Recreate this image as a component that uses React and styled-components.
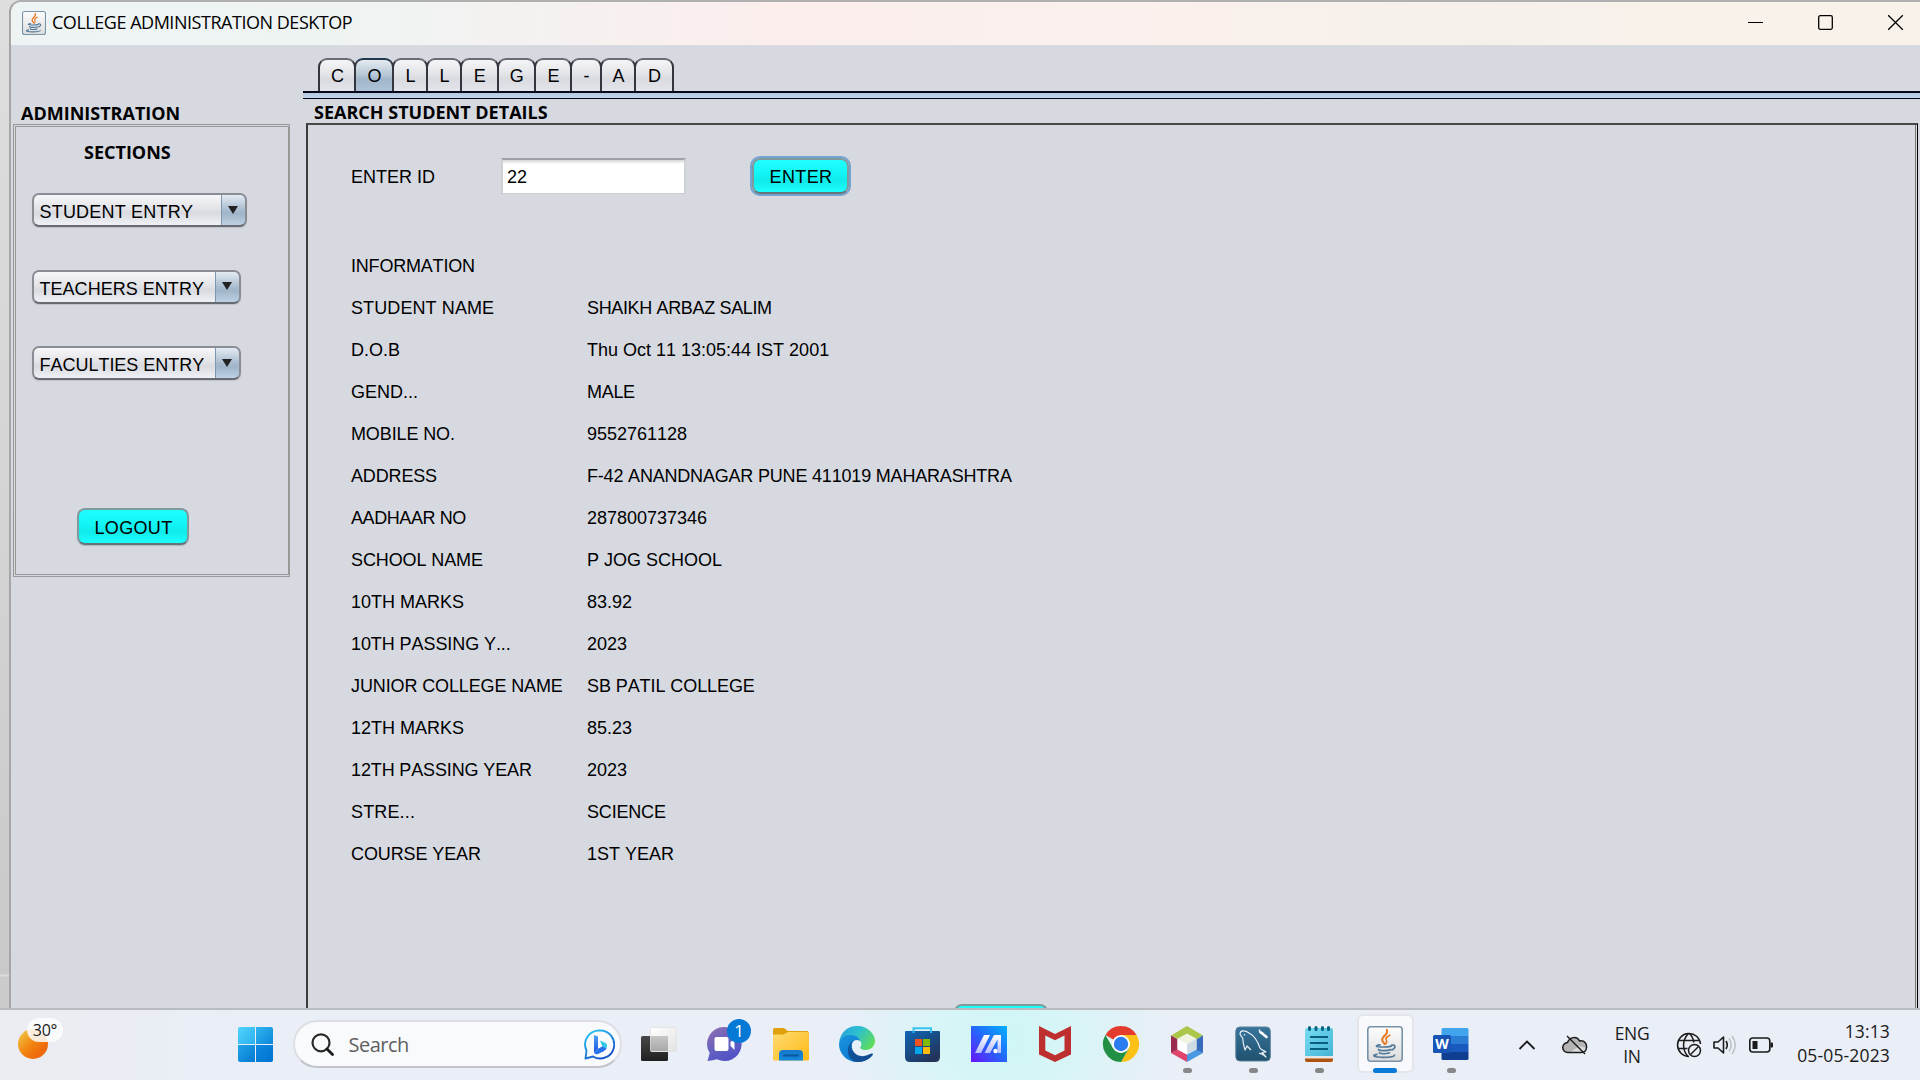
import React from "react";
import styled, { createGlobalStyle } from "styled-components";

const swing = `"Liberation Sans", Arial, sans-serif`;
const segoe = `"Open Sans", "Noto Sans", sans-serif`;

const Global = createGlobalStyle`
  * { box-sizing: border-box; }
  body { margin: 0; overflow: hidden; background: #d6d9e0; }
`;

const Screen = styled.div`
  width: 1920px;
  height: 1080px;
  display: flex;
  flex-direction: column;
  overflow: hidden;
  font-family: ${swing};
  font-size: 18px;
  font-kerning: none;
  color: #000;
  background: #d5d5d5;
`;

const Desktop = styled.div`
  height: 1008px;
  display: flex;
  background: linear-gradient(180deg, #dedede 0, #d2d2d2 60%, #c9c9c9 974px, #dcdcdc 975px, #dcdcdc 976px, #cbcbcb 977px);
`;

const AppWindow = styled.div`
  flex: 1;
  margin-left: 9px;
  display: flex;
  flex-direction: column;
  border-top: 2px solid #b0b0b0;
  border-left: 2px solid #a6a6a6;
  border-top-left-radius: 12px;
  overflow: hidden;
  background: #d6d9e0;
`;

const TitleBar = styled.header`
  height: 43px;
  flex: none;
  display: flex;
  align-items: center;
  padding: 0 16px 2px 11px;
  background: linear-gradient(90deg, #eef4f4 0, #eff4f3 340px, #fbeeed 760px, #fbf0ed 1100px, #f5f1ea 1480px, #f9f2eb 1700px);
`;

const TitleText = styled.h1`
  margin: 0 auto 1px 6px;
  font: 400 18px/24px ${segoe};
  letter-spacing: -0.47px;
`;

const WindowControls = styled.div`
  display: flex;
  gap: 53px;
  svg { display: block; }
`;

const Body = styled.div`
  flex: 1;
  display: flex;
  min-height: 0;
`;

const Sidebar = styled.aside`
  width: 292px;
  flex: none;
  padding: 57px 0 0 2px;
`;

const GroupTitle = styled.h2`
  margin: 0 0 0 ${(p) => p.$indent}px;
  font: 700 18px/22px ${segoe};
`;

const SidePanel = styled.section`
  width: 277px;
  height: 453px;
  border: 3px double #989898;
  border-right: 2px solid #999;
  padding-top: 14px;
  display: flex;
  flex-direction: column;
  align-items: flex-start;
`;

const ComboList = styled.div`
  display: flex;
  flex-direction: column;
  gap: 42.5px;
  margin: 30px 0 128px 15.5px;
`;

const Combo = styled.div`
  width: ${(p) => p.$width}px;
  height: 34px;
  display: flex;
  border: 2px solid #8b8d94;
  border-bottom-color: #686a73;
  border-radius: 7px;
  overflow: hidden;
  background: linear-gradient(#f7f7f9, #e3e4e8 45%, #d8dae0 60%, #f0f1f5);
  box-shadow: 0 1px 1px #bfc2c9;
`;

const ComboText = styled.span`
  flex: 1;
  padding-left: 6px;
  line-height: 34px;
  letter-spacing: ${(p) => p.$spacing}px;
  white-space: nowrap;
`;

const ComboArrow = styled.span`
  width: 26px;
  margin: -2px -2px -2px 0;
  display: flex;
  align-items: center;
  justify-content: center;
  border: 2px solid #5b7590;
  border-left: 1px solid #7f97ae;
  border-top-color: #7e93a8;
  border-bottom-color: #3d556f;
  border-radius: 0 7px 7px 0;
  background: linear-gradient(#e3ebf2, #a9bccf 50%, #a0b5c9 62%, #bed1e4);
  &::after {
    content: "";
    border: 5px solid transparent;
    border-top: 8px solid #222;
    border-bottom: 0;
    margin-bottom: 1px;
  }
`;

const Button = styled.button`
  width: ${(p) => p.$width}px;
  height: ${(p) => p.$height}px;
  flex: none;
  padding: 2px 0 0 1px;
  margin: ${(p) => p.$margin || 0};
  border: 2px solid #7f9a9d;
  border-bottom-color: #64747a;
  border-radius: 8px;
  background: linear-gradient(#20ffff, #12f4f4 45%, #10eaea 65%, #1cffff);
  box-shadow: ${(p) => (p.$focus ? "0 0 0 2px #73a4d1" : "0 1px 1px #b2b5bc")};
  font: 18px/20px ${swing};
  letter-spacing: 0.35px;
  color: #000;
`;

const Main = styled.main`
  flex: 1;
  min-width: 0;
  display: flex;
  flex-direction: column;
`;

const Tabs = styled.nav`
  display: flex;
  height: 47px;
  flex: none;
  padding: 13px 0 0 15px;
  margin-bottom: -1px;
`;

const Tab = styled.div`
  width: ${(p) => p.$width}px;
  height: 34px;
  margin-right: -2px;
  padding-left: 1px;
  border: 2px solid ${(p) => (p.$on ? "#22384f" : "#6a6b73")};
  border-left-color: #34353f;
  border-right-color: #34353f;
  border-bottom: ${(p) => (p.$on ? "0" : "1px solid #55565f")};
  border-radius: 9px 9px 0 0;
  background: ${(p) =>
    p.$on
      ? "linear-gradient(#e4ebf1, #b4c5d4 48%, #a2b6ca 60%, #afc4d8)"
      : "linear-gradient(#f5f5f7, #e3e4e8 45%, #d9dbe1 60%, #e2e4ea)"};
  text-align: center;
  line-height: 33px;
`;

const TabRail = styled.div`
  height: 8px;
  flex: none;
  border: solid #05051c;
  border-width: 2px 0 1px;
  background: linear-gradient(#b3c9de, #c0d6ea);
`;

const MainTitle = styled(GroupTitle)`
  padding-top: 2px;
  flex: none;
`;

const Panel = styled.section`
  flex: 1;
  min-height: 0;
  margin: 0 2px 0 3px;
  border-left: 2px solid #3b3b3b;
  border-top: 2px solid #484848;
  border-right: 1px solid #000;
  box-shadow: inset -1px 0 #d6d9e0, inset -2px 0 #777;
  overflow: hidden;
  padding: 30px 0 0 43px;
`;

const SearchRow = styled.div`
  height: 41px;
  display: flex;
  align-items: center;
  margin-bottom: 49px;
`;

const FieldLabel = styled.label`
  width: 150px;
  padding-top: 3px;
`;

const IdField = styled.div`
  width: 185px;
  height: 36px;
  margin-right: 66px;
  padding-left: 4px;
  border: 1px solid #c9cbd0;
  border-left: 2px solid #cfd1d6;
  border-right: 2px solid #cfd1d6;
  border-top: 2px solid #a0a1a5;
  background: linear-gradient(#d4d5d8, #fff 4px);
  line-height: 35px;
`;

const Details = styled.dl`
  margin: 0;
  display: grid;
  grid-template-columns: 236px 1fr;
  grid-auto-rows: 42px;
  line-height: 42px;
  white-space: nowrap;
`;

const Term = styled.dt`
  letter-spacing: ${(p) => p.$spacing || 0}px;
`;

const Value = styled.dd`
  margin: 0;
  letter-spacing: ${(p) => p.$spacing || 0}px;
`;

const Taskbar = styled.footer`
  height: 72px;
  display: flex;
  align-items: flex-start;
  border-top: 2px solid #b9bbc0;
  background:
    radial-gradient(ellipse 170px 130px at 1005px 30px, #cff6f5 0, #d6f5f6 35%, rgba(220, 242, 247, 0) 100%),
    linear-gradient(90deg, #ebecf1, #e9eef7 260px, #eaeef7);
  font-family: ${segoe};
  color: #1b1b1b;
`;

const Weather = styled.div`
  width: 220px;
  height: 70px;
  padding: 19px 0 0 18px;
`;

const Sun = styled.div`
  width: 30px;
  height: 30px;
  border-radius: 50%;
  background: linear-gradient(135deg, #f0b93c 15%, #f2820f 50%, #ee6a0c 75%);
  position: relative;
`;

const Degrees = styled.span`
  position: absolute;
  left: 9px;
  top: -11px;
  width: 36px;
  height: 24px;
  border-radius: 12px;
  background: rgba(252, 252, 252, 0.86);
  text-align: center;
  font-size: 16px;
  line-height: 24px;
  letter-spacing: -0.2px;
`;

const Start = styled.div`
  width: 35px;
  height: 35px;
  margin: 17px 20px 0 18px;
  display: grid;
  grid-template-columns: 17px 17px;
  grid-template-rows: 17px 17px;
  gap: 1px;
  border-radius: 2px;
  overflow: hidden;
  span:nth-child(1) { background: linear-gradient(135deg, #51d4fd, #2ab0ee); }
  span:nth-child(2) { background: linear-gradient(135deg, #30b6f0, #0d86da); }
  span:nth-child(3) { background: linear-gradient(135deg, #22a5e8, #0579d4); }
  span:nth-child(4) { background: linear-gradient(135deg, #0f8ae0, #0072d0); }
`;

const SearchBox = styled.div`
  width: 329px;
  height: 48px;
  margin: 10px 4px 0 0;
  padding: 0 5px 0 15.5px;
  display: flex;
  align-items: center;
  border: 2px solid #dedfe5;
  border-bottom-color: #c3c4ca;
  border-radius: 24px;
  background: #f9fafc;
`;

const SearchText = styled.span`
  flex: 1;
  padding-left: 15px;
  font-size: 20px;
  letter-spacing: -0.5px;
  color: #5f5f61;
`;

const AppCell = styled.div`
  width: 66px;
  height: 70px;
  display: flex;
  flex-direction: column;
  align-items: center;
`;

const AppTile = styled.div`
  width: 57px;
  height: 59px;
  margin-top: 4px;
  padding-top: 10px;
  display: flex;
  flex-direction: column;
  align-items: center;
  border-radius: 6px;
  border: 2px solid ${(p) => (p.$active ? "#e3e5ea" : "transparent")};
  background: ${(p) => (p.$active ? "#f8f9fc" : "none")};
  svg { display: block; flex: none; overflow: visible; }
`;

const Running = styled.i`
  width: ${(p) => (p.$active ? 24 : 9)}px;
  height: 5px;
  margin-top: 6px;
  flex: none;
  border-radius: 3px;
  background: ${(p) => (p.$active ? "#0a7ad8" : "#878787")};
`;

const Tray = styled.div`
  flex: 1;
  height: 70px;
  display: flex;
  align-items: center;
  padding: 0 29px 0 34px;
  svg { display: block; flex: none; }
`;

const TrayText = styled.div`
  width: ${(p) => p.$width}px;
  margin: 0 ${(p) => p.$after}px 0 ${(p) => p.$before}px;
  padding-bottom: ${(p) => p.$lift}px;
  font-size: 17.5px;
  line-height: ${(p) => p.$line}px;
  letter-spacing: ${(p) => p.$spacing}px;
  text-align: ${(p) => p.$align};
  white-space: nowrap;
`;

const Gap = styled.span`
  width: ${(p) => p.$w}px;
  flex: none;
`;

function JavaIcon({ size, id }) {
  return (
    <svg width={size} height={size} viewBox="0 0 36 36">
      <defs>
        <linearGradient id={id} x1="0" y1="0" x2="0" y2="1">
          <stop offset="0" stopColor="#fdfdfd" />
          <stop offset="1" stopColor="#dcdcdd" />
        </linearGradient>
      </defs>
      <rect x="0.8" y="0.8" width="34.4" height="34.4" rx="3" fill={`url(#${id})`} stroke="#7892a8" strokeWidth="1.6" />
      <g fill="none" stroke="#e87a22" strokeWidth="2" strokeLinecap="round">
        <path d="M19.8 3.8c2.2 4.8-5.6 6.6-4.6 10.4.3 1.500 1.700 2.600 2.400 3.800" />
        <path d="M22.800 9.300c-2.700 1.300-4.700 2.600-3.500 4.700.9 1.500.6 2.500-.5 3.900" strokeWidth="1.7" />
      </g>
      <g fill="none" stroke="#537998" strokeWidth="1.700" strokeLinecap="round">
        <path d="M13 18.900c-5 .9-5.400 2 3 2.100 4 0 6.500-.3 8.400-.9" />
        <path d="M24.800 19.200c3.800-.8 4.400 3 .2 4.700" />
        <path d="M11.500 23.300c-1 1.300 7.500 2 12.200.3" />
        <path d="M12.500 26.500c-.8 1.300 6 1.900 10 .3" />
        <path d="M10 28.300c-6.500 1.300-2.300 3 6.700 3 6.500 0 10.500-1 10.800-2.100" />
      </g>
    </svg>
  );
}

const TaskView = () => (
  <svg width="36" height="36" viewBox="0 0 36 36">
    <defs>
      <linearGradient id="tvDark" x1="0" y1="0" x2="0" y2="1"><stop offset="0" stopColor="#484848" /><stop offset="1" stopColor="#202020" /></linearGradient>
      <linearGradient id="tvLight" x1="0" y1="0" x2="1" y2="1"><stop offset="0" stopColor="#fff" /><stop offset="1" stopColor="#e2e2e2" /></linearGradient>
      <linearGradient id="tvMix" x1="0" y1="0" x2="0" y2="1"><stop offset="0" stopColor="#c6c6c6" /><stop offset="1" stopColor="#a9a9a9" /></linearGradient>
    </defs>
    <rect x="0" y="10" width="27" height="25" rx="1.500" fill="url(#tvDark)" />
    <rect x="9.500" y="1.500" width="26" height="24" rx="1" fill="url(#tvLight)" stroke="#e4e4e4" />
    <path d="M9.500 10H27v15H9.500z" fill="url(#tvMix)" />
  </svg>
);

const ChatIcon = () => (
  <svg width="36" height="36" viewBox="0 0 36 36">
    <defs>
      <linearGradient id="chat" x1="0" y1="0" x2="0.600" y2="1"><stop offset="0" stopColor="#9270ae" /><stop offset="0.600" stopColor="#6360c0" /><stop offset="1" stopColor="#5352c6" /></linearGradient>
    </defs>
    <path d="M17.500 1a17 17 0 1 1-7.500 32.200Q6 34.500.5 35l2.200-8A17 17 0 0 1 17.500 1z" fill="url(#chat)" />
    <rect x="7.500" y="11" width="14" height="14" rx="2" fill="#fff" />
    <path d="M23.500 16l4-3v11l-4-4z" fill="#fff" />
    <circle cx="32" cy="5" r="12" fill="#0679d6" />
    <text x="32" y="11" textAnchor="middle" fontSize="17" fontFamily="Open Sans" fill="#fff">1</text>
  </svg>
);

const FolderIcon = () => (
  <svg width="36" height="36" viewBox="0 0 36 36">
    <defs>
      <linearGradient id="fold" x1="0" y1="0" x2="1" y2="1"><stop offset="0" stopColor="#ffdc73" /><stop offset="1" stopColor="#fdb813" /></linearGradient>
      <linearGradient id="foldBlue" x1="0" y1="0" x2="0" y2="1"><stop offset="0" stopColor="#1379cc" /><stop offset="1" stopColor="#1489dc" /></linearGradient>
    </defs>
    <path d="M0 3.500Q0 2 1.500 2h9.500l4 3h19.500L36 7v5H0z" fill="#dfa00c" />
    <path d="M0 8.500h10.500L15 6h19.500Q36 6 36 7.500V33q0 1.500-1.500 1.500h-33Q0 34.500 0 33z" fill="url(#fold)" />
    <path d="M6 34.500V28q0-4 4-4h16q4 0 4 4v6.500z" fill="url(#foldBlue)" />
    <path d="M11 29.500h14" stroke="#0a569a" strokeWidth="2" strokeLinecap="round" />
  </svg>
);

const EdgeIcon = () => (
  <svg width="36" height="36" viewBox="0 0 36 36">
    <defs>
      <linearGradient id="edTop" x1="0" y1="0.200" x2="1" y2="0.700"><stop offset="0" stopColor="#27a2dd" /><stop offset="0.450" stopColor="#2dc0cd" /><stop offset="1" stopColor="#61de57" /></linearGradient>
      <linearGradient id="edLeft" x1="0" y1="0" x2="0.500" y2="1"><stop offset="0" stopColor="#1b92dc" /><stop offset="1" stopColor="#087bd2" /></linearGradient>
      <linearGradient id="edDark" x1="0" y1="0" x2="1" y2="1"><stop offset="0" stopColor="#0d58a4" /><stop offset="1" stopColor="#14498b" /></linearGradient>
    </defs>
    <path d="M0 17C1 7 8 0 18 0c11 0 18 8 18 15 0 5-4 9-9 9-4 0-6.500-1.500-5.500-3 2.500-3.500 0-8-5-8C8 10 2 12 0 17z" fill="url(#edTop)" />
    <path d="M0 18C1 12 6 9 11 9c5 0 9 2 10 6-3-2-7-1-8 3-1 9 5 13 11 13 4 0 7-1 9-3l1 .5C31 33 25 36 18 36 8 36 0 28 0 18z" fill="url(#edLeft)" />
    <path d="M15 14c-3 2-4 7-1 11 3 5 9 6 13 4.500 3-1 5-2.500 6.500-2l.5.800C31 33 25.500 36 19 36c-8-1-11-7-10-13 .5-4 3-8 6-9z" fill="url(#edDark)" />
  </svg>
);

const StoreIcon = () => (
  <svg width="36" height="36" viewBox="0 0 36 36">
    <defs>
      <linearGradient id="store" x1="0" y1="0" x2="0.700" y2="1"><stop offset="0" stopColor="#0d66b6" /><stop offset="1" stopColor="#243358" /></linearGradient>
    </defs>
    <path d="M8.500 8V2.200H26V8" fill="none" stroke="#38c1ef" strokeWidth="2" />
    <path d="M0 6Q0 5 1 5h33q1 0 1 1v25q0 5-5 5H5q-5 0-5-5z" fill="url(#store)" />
    <path d="M8.500 5v2M26 5v2" stroke="#2cb8ea" strokeWidth="2" />
    <path d="M10 13h7v7h-7z" fill="#f1511f" /><path d="M18 13h7v7h-7z" fill="#80bb03" />
    <path d="M10 21h7v7h-7z" fill="#05a5ee" /><path d="M18 21h7v7h-7z" fill="#fbb90b" />
  </svg>
);

const AsusIcon = () => (
  <svg width="36" height="36" viewBox="0 0 36 36">
    <defs>
      <linearGradient id="asus" x1="0" y1="1" x2="1" y2="0"><stop offset="0" stopColor="#6813f8" /><stop offset="0.550" stopColor="#1f6efb" /><stop offset="1" stopColor="#04b0ff" /></linearGradient>
      <linearGradient id="asusM" x1="0" y1="0" x2="0" y2="1"><stop offset="0" stopColor="#fff" /><stop offset="1" stopColor="#b6bdfb" /></linearGradient>
    </defs>
    <path d="M0 0h36v36H0z" fill="url(#asus)" />
    <path d="M13 9h6L10 27H4zM23 9h7v18h-3.500V13.500L19 27h-5.500z" fill="url(#asusM)" />
    <circle cx="24.500" cy="25" r="2.200" fill="#fff" />
  </svg>
);

const McAfeeIcon = () => (
  <svg width="36" height="36" viewBox="0 0 36 36">
    <path d="M2 0l16 8L34 0v28.500L18 36 2 28.500zM8.300 9.500v15L18 29.200l9.500-4.700v-15L18 14.300z" fill="#be3030" fillRule="evenodd" />
  </svg>
);

const ChromeIcon = () => (
  <svg width="36" height="36" viewBox="0 0 36 36">
    <path d="M18 18L2.400 9A18 18 0 0 1 33.600 9z" fill="#e33c2e" />
    <path d="M18 18V9h15.600A18 18 0 0 1 18 36l7.800-13.500z" fill="#fbc116" />
    <path d="M25.800 22.500L18 36A18 18 0 0 1 2.400 9l7.800 13.500z" fill="#219044" />
    <circle cx="18" cy="18" r="9" fill="#fff" /><circle cx="18" cy="18" r="7.200" fill="#2b7cf0" />
  </svg>
);

const NetBeansIcon = () => (
  <svg width="36" height="36" viewBox="0 0 36 36">
    <path d="M2 9.500L18 0l16 9.500-6.500 3.800L18 8 8.500 13.300z" fill="#abc649" />
    <path d="M2 9.500l6.500 3.800V24L2 27z" fill="#9a2c4d" />
    <path d="M2 27l6.500-3.500L18 28.500V36z" fill="#e0446c" />
    <path d="M34 27l-6.500-3.500L18 28.500V36z" fill="#4a98e4" />
    <path d="M34 9.500l-6.500 3.800V24l6.500 3z" fill="#376bbb" />
    <path d="M18 7.500l9.500 5.300L18 18l-9.500-5.200z" fill="#eff3df" />
    <path d="M8.500 12.800L18 18v10.500l-9.500-5z" fill="#fff" /><path d="M27.500 12.800L18 18v10.500l9.500-5z" fill="#d0dce4" />
  </svg>
);

const MySqlIcon = () => (
  <svg width="36" height="36" viewBox="0 0 36 36">
    <defs>
      <linearGradient id="mysql" x1="0" y1="0" x2="0" y2="1"><stop offset="0" stopColor="#37749b" /><stop offset="1" stopColor="#20516e" /></linearGradient>
    </defs>
    <rect x="0.800" y="1" width="34.500" height="34" rx="4" fill="url(#mysql)" stroke="#5d839b" />
    <path d="M5 8C5 4 10 4 14 7c6 3 9 9 11 15 1 2 3 2 6 4l-4 .5 4 4.500c-3-3-5-3-7-4M5 8c1 3 3 3 3 6 0 4 1 6 2 10l2-4 4 4" fill="none" stroke="#e7f0f5" strokeWidth="1.200" strokeLinejoin="round" />
    <circle cx="9.500" cy="8.800" r=".8" fill="#fff" />
    <path d="M26 6.500l5.500 4.500" stroke="#fff" strokeWidth="2.600" strokeLinecap="round" />
    <path d="M24.500 3.500c-.5 4 2.500 4.500 4 3.500" stroke="#fff" strokeWidth="1.500" fill="none" />
  </svg>
);

const NotepadIcon = () => (
  <svg width="36" height="36" viewBox="0 0 36 36">
    <defs>
      <linearGradient id="note" x1="0" y1="0" x2="1" y2="1"><stop offset="0" stopColor="#77dcf1" /><stop offset="1" stopColor="#46b3d6" /></linearGradient>
    </defs>
    <path d="M4 31h28v3q0 2-2 2H6q-2 0-2-2z" fill="#b0520f" />
    <path d="M4 29h28v3.500H4z" fill="#e9e7e6" />
    <path d="M4 4q0-2 2-2h24q2 0 2 2v26H4z" fill="url(#note)" />
    <path d="M8.500 1.500v2M15 1.500v2M21.500 1.500v2M27.500 1.500v2" stroke="#09637f" strokeWidth="3" strokeLinecap="round" />
    <path d="M9 11h18M9 17h18M9 23h18" stroke="#075f80" strokeWidth="2" />
  </svg>
);

const WordIcon = () => (
  <svg width="36" height="36" viewBox="0 0 36 36">
    <path d="M8.500 3.500Q8.500 2 10 2h24q1.500 0 1.500 1.500V10h-27z" fill="#41a5ee" />
    <path d="M8.500 10h27v8h-27z" fill="#2b7cd3" /><path d="M8.500 18h27v8h-27z" fill="#185abd" />
    <path d="M8.500 26h27v6.500q0 1.500-1.500 1.500H10q-1.500 0-1.500-1.500z" fill="#103f91" />
    <rect x="0" y="9" width="18" height="18" rx="1.500" fill="#1853b6" />
    <text x="9" y="23" textAnchor="middle" fontSize="14" fontWeight="700" fontFamily="Open Sans" fill="#fff">W</text>
  </svg>
);

const BingIcon = () => (
  <svg width="31" height="31" viewBox="0 0 31 31">
    <defs>
      <linearGradient id="bing" x1="0" y1="0" x2="0.600" y2="1"><stop offset="0" stopColor="#2ccff5" /><stop offset="1" stopColor="#1653c9" /></linearGradient>
      <linearGradient id="bingB" x1="0" y1="0" x2="0" y2="1"><stop offset="0" stopColor="#4aa3f5" /><stop offset="1" stopColor="#1c54e0" /></linearGradient>
    </defs>
    <path d="M16 1.500a14 14 0 1 1-7 26L1.500 29.500l1-8A14 14 0 0 1 16 1.500z" fill="none" stroke="url(#bing)" strokeWidth="1.900" strokeLinejoin="round" />
    <path d="M10 6l4 1.500v12.200L10 24z" fill="url(#bingB)" />
    <path d="M10 24l4-4.300 5-2.700 3.500 2.500c-1 2-4 3.500-8.500 5.500-1.500.5-3 0-4-1z" fill="#2773ee" />
    <path d="M16 11.500l5.500 2.500q2.500 2 1 5.500L18 16.500z" fill="#2cc8e8" />
  </svg>
);

const apps = [
  { icon: TaskView },
  { icon: ChatIcon },
  { icon: FolderIcon },
  { icon: EdgeIcon },
  { icon: StoreIcon },
  { icon: AsusIcon },
  { icon: McAfeeIcon },
  { icon: ChromeIcon },
  { icon: NetBeansIcon, running: true },
  { icon: MySqlIcon, running: true },
  { icon: NotepadIcon, running: true },
  { icon: () => <JavaIcon size={36} id="javaTask" />, running: true, active: true },
  { icon: WordIcon, running: true },
];

const tabs = [
  ["C", 38], ["O", 40], ["L", 36], ["L", 36], ["E", 38.5], ["G", 39.5], ["E", 38], ["-", 32], ["A", 36], ["D", 40],
];

const combos = [
  ["STUDENT ENTRY", 215, 0.2],
  ["TEACHERS ENTRY", 209, 0.03],
  ["FACULTIES ENTRY", 209, -0.02],
];

const details = [
  ["INFORMATION", "", -0.2],
  ["STUDENT NAME", "SHAIKH ARBAZ SALIM", 0.1, -0.35],
  ["D.O.B", "Thu Oct 11 13:05:44 IST 2001"],
  ["GEND...", "MALE", 0, -0.3],
  ["MOBILE NO.", "9552761128", -0.12],
  ["ADDRESS", "F-42 ANANDNAGAR PUNE 411019 MAHARASHTRA", -0.15, -0.19],
  ["AADHAAR NO", "287800737346", -0.42],
  ["SCHOOL NAME", "P JOG SCHOOL", -0.1],
  ["10TH MARKS", "83.92"],
  ["10TH PASSING Y...", "2023", -0.08],
  ["JUNIOR COLLEGE NAME", "SB PATIL COLLEGE", -0.12, -0.08],
  ["12TH MARKS", "85.23"],
  ["12TH PASSING YEAR", "2023", -0.13],
  ["STRE...", "SCIENCE", 0.15, -0.18],
  ["COURSE YEAR", "1ST YEAR", -0.1],
];

export default function App() {
  return (
    <Screen>
      <Global />
      <Desktop>
        <AppWindow>
          <TitleBar>
            <JavaIcon size={24} id="javaTitle" />
            <TitleText>COLLEGE ADMINISTRATION DESKTOP</TitleText>
            <WindowControls>
              <svg width="17" height="17" viewBox="0 0 17 17"><path d="M1 8.500h15" stroke="#000" /></svg>
              <svg width="17" height="17" viewBox="0 0 17 17"><rect x="1.700" y="1.700" width="13.600" height="13.600" rx="1.500" fill="none" stroke="#000" strokeWidth="1.300" /></svg>
              <svg width="17" height="17" viewBox="0 0 17 17"><path d="M1.200 1.200l14.600 14.600M15.800 1.200L1.200 15.800" stroke="#000" strokeWidth="1.300" /></svg>
            </WindowControls>
          </TitleBar>
          <Body>
            <Sidebar>
              <GroupTitle $indent={8}>ADMINISTRATION</GroupTitle>
              <SidePanel>
                <GroupTitle $indent={68}>SECTIONS</GroupTitle>
                <ComboList>
                  {combos.map(([text, width, spacing]) => (
                    <Combo key={text} $width={width}>
                      <ComboText $spacing={spacing}>{text}</ComboText>
                      <ComboArrow />
                    </Combo>
                  ))}
                </ComboList>
                <Button $width={112} $height={37} $margin="0 0 0 61px">LOGOUT</Button>
              </SidePanel>
            </Sidebar>
            <Main>
              <Tabs>
                {tabs.map(([letter, width], i) => (
                  <Tab key={i} $width={width} $on={i === 1}>{letter}</Tab>
                ))}
              </Tabs>
              <TabRail />
              <MainTitle $indent={11}>SEARCH STUDENT DETAILS</MainTitle>
              <Panel>
                <SearchRow>
                  <FieldLabel>ENTER ID</FieldLabel>
                  <IdField>22</IdField>
                  <Button $width={97} $height={36} $focus>ENTER</Button>
                </SearchRow>
                <Details>
                  {details.map(([term, value, ts, vs]) => (
                    <React.Fragment key={term}>
                      <Term $spacing={ts}>{term}</Term>
                      <Value $spacing={vs}>{value}</Value>
                    </React.Fragment>
                  ))}
                </Details>
                <Button $width={94} $height={36} $margin="129px 0 0 603px" />
              </Panel>
            </Main>
          </Body>
        </AppWindow>
      </Desktop>
      <Taskbar>
        <Weather>
          <Sun><Degrees>30°</Degrees></Sun>
        </Weather>
        <Start><span /><span /><span /><span /></Start>
        <SearchBox>
          <svg width="23" height="23" viewBox="0 0 23 23">
            <circle cx="10" cy="9.800" r="8.500" fill="none" stroke="#2a2a2a" strokeWidth="2.200" />
            <path d="M16 16l5.500 5.500" stroke="#1c1c1c" strokeWidth="2.800" strokeLinecap="round" />
          </svg>
          <SearchText>Search</SearchText>
          <BingIcon />
        </SearchBox>
        {apps.map(({ icon: Icon, running, active }, i) => (
          <AppCell key={i}>
            <AppTile $active={active}>
              <Icon />
              {running && <Running $active={active} />}
            </AppTile>
          </AppCell>
        ))}
        <Tray>
          <svg width="18" height="12" viewBox="0 0 18 12"><path d="M1.500 10L9 2.500l7.500 7.500" fill="none" stroke="#1b1b1b" strokeWidth="1.800" /></svg>
          <Gap $w={26} />
          <svg width="26" height="20" viewBox="0 0 26 20">
            <path d="M6 17.500a5 5 0 0 1-.5-10C7.500 2 15 .5 17.500 6c5-1 7.500 3 7 6.500-.3 3-2.500 5-5 5z" fill="#b5b5b5" />
            <path d="M8 17.500L17 11l7.500 2c-.5 2.500-2 4.500-4.500 4.500z" fill="#dcdcdc" />
            <path d="M6 17.500a5 5 0 0 1-.5-10C7.500 2 15 .5 17.500 6c5-1 7.500 3 7 6.500-.3 3-2.500 5-5 5z" fill="none" stroke="#1b1b1b" strokeWidth="1.500" />
            <path d="M5 1l18 18" stroke="#1b1b1b" strokeWidth="1.500" />
          </svg>
          <TrayText $width={40} $before={24} $after={24} $lift={1} $line={23} $spacing={-0.3} $align="center">ENG<br />IN</TrayText>
          <svg width="26" height="26" viewBox="0 0 26 26">
            <g fill="none" stroke="#1b1b1b" strokeWidth="1.500">
              <path d="M13 24.500A11.500 11.500 0 1 1 24.500 12" />
              <path d="M12.500 1.500C6 8 6 18 12 24.500M13.500 1.500c3 3 4 6 4.300 9M2.500 8.500h21M2.500 16.500h9" />
              <circle cx="18.500" cy="18.500" r="6" /><path d="M14.500 22.500l8-8" />
            </g>
          </svg>
          <Gap $w={10} />
          <svg width="26" height="22" viewBox="0 0 26 22">
            <path d="M2 8h4l5.500-5v16L6 14H2z" fill="none" stroke="#1b1b1b" strokeWidth="1.600" strokeLinejoin="round" />
            <path d="M14 7q2.500 4 0 8" fill="none" stroke="#1b1b1b" strokeWidth="1.600" />
            <path d="M17 4.500q4.500 6.500 0 13M20 2q6.500 9 0 18" fill="none" stroke="#bdbfc5" strokeWidth="1.500" />
          </svg>
          <Gap $w={10} />
          <svg width="26" height="18" viewBox="0 0 26 18">
            <rect x="1.800" y="2" width="20" height="14" rx="3" fill="none" stroke="#1b1b1b" strokeWidth="1.600" />
            <path d="M4.500 5h5v8h-5z" fill="#1b1b1b" /><path d="M22.500 6.500h1.500q1 0 1 1v3q0 1-1 1h-1.500z" fill="#1b1b1b" />
          </svg>
          <TrayText $width={96} $before={20} $after={0} $lift={4} $line={24} $spacing={0.15} $align="right">13:13<br />05-05-2023</TrayText>
        </Tray>
      </Taskbar>
    </Screen>
  );
}
